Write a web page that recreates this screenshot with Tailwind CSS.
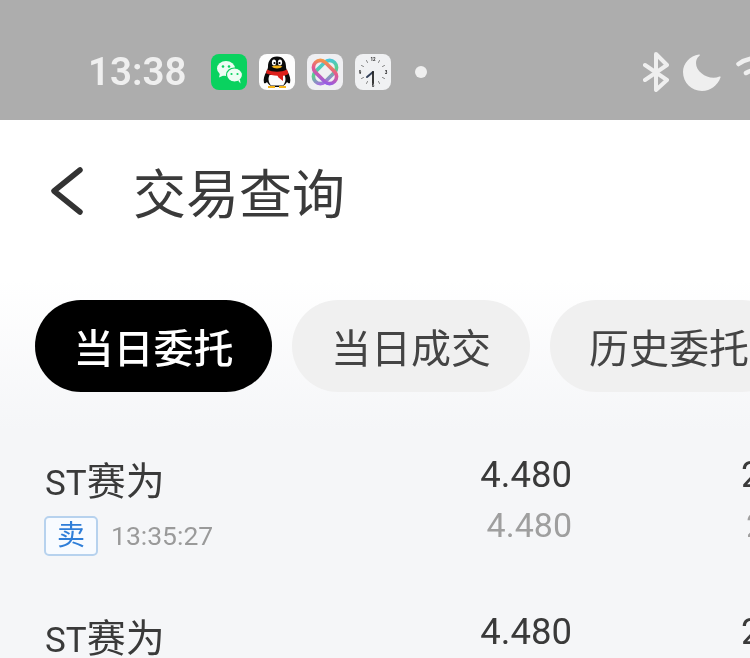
<!DOCTYPE html>
<html lang="zh">
<head>
<meta charset="utf-8">
<script src="https://cdn.jsdelivr.net/npm/@tailwindcss/browser@4"></script>
</head>
<body class="m-0">
<div class="w-[750px] h-[658px] overflow-hidden flex flex-col bg-[#f5f6f8] blur-[0.4px] font-['Roboto','Noto_Sans_CJK_SC',sans-serif]">
  <!-- status bar -->
  <div class="h-[120px] shrink-0 bg-[#adadad] flex items-center pl-[88px] pt-[24px] overflow-hidden">
    <span class="text-[38.500px] leading-none font-semibold text-[#efefef] w-[123px] shrink-0">13:38</span>
    <div class="flex items-center gap-[12px] shrink-0">
      <svg class="w-[36px] h-[36px] shrink-0" viewBox="0 0 36 36">
        <rect width="36" height="36" rx="8" fill="#0ad25f"/>
        <ellipse cx="15" cy="14.500" rx="9" ry="7.500" fill="#eefcf3"/>
        <path d="M9 19l-1 4.500 5.500-2.500z" fill="#eefcf3"/>
        <ellipse cx="23.500" cy="21" rx="8" ry="7" stroke="#0ad25f" stroke-width="1.200" fill="#eefcf3"/>
        <path d="M27 26.500l2.500 3-.5-4z" fill="#eefcf3"/>
        <circle cx="12" cy="12.500" r="1.300" fill="#0ad25f"/><circle cx="18" cy="12.500" r="1.300" fill="#0ad25f"/>
        <circle cx="20.500" cy="20" r="1.100" fill="#0ad25f"/><circle cx="26.500" cy="20" r="1.100" fill="#0ad25f"/>
      </svg>
      <svg class="w-[36px] h-[36px] shrink-0" viewBox="0 0 36 36">
        <rect width="36" height="36" rx="8" fill="#fdfdfd"/>
        <path d="M18 2.500c-6.500 0-9 5-9 10 0 2-.5 3-1.800 5.500C5.500 21 4 25 5 29c1 .8 2 0 3-1 1.500 3 5 5 10 5s8.500-2 10-5c1 1 2 1.800 3 1 1-4-.5-8-2.200-11-1.300-2.500-1.800-3.500-1.800-5.500 0-5-2.500-10-9-10z" fill="#0a0a0a"/>
        <path d="M10.500 21c-1.500 3-1.500 7 1.500 10.500h12c3-3.500 3-7.500 1.500-10.500z" fill="#fbfbfb"/>
        <path d="M8 15.500c6 3 14 3 20 0l1.500 4c-1 1.500-3 2-5.500 2.300v5.200l-4.500-3.500-1-1.700c-4 0-8-1-11.500-2.500z" fill="#dc1f1a"/>
        <ellipse cx="15" cy="8.500" rx="2.100" ry="3" fill="#fff"/><ellipse cx="21" cy="8.500" rx="2.100" ry="3" fill="#fff"/>
        <circle cx="15.500" cy="9" r="1.100" fill="#000"/><circle cx="20.500" cy="9" r="1.100" fill="#000"/>
        <path d="M12.500 12.500c2.500-1.500 8.500-1.500 11 0-2.500 2.500-8.500 2.500-11 0z" fill="#f5b417"/>
        <path d="M9 32h7v2H9zM20 32h7v2h-7z" fill="#f5b417"/>
      </svg>
      <svg class="w-[36px] h-[36px] shrink-0" viewBox="0 0 36 36" fill="none">
        <defs>
          <linearGradient id="g1" x1="0" y1="0" x2="1" y2="1"><stop offset="0" stop-color="#f6a03c"/><stop offset=".45" stop-color="#e55a8c"/><stop offset="1" stop-color="#8a5cf0"/></linearGradient>
          <linearGradient id="g2" x1="1" y1="0" x2="0" y2="1"><stop offset="0" stop-color="#45c5e8"/><stop offset=".5" stop-color="#5bd08c"/><stop offset="1" stop-color="#b45cf0"/></linearGradient>
        </defs>
        <rect width="36" height="36" rx="8" fill="#efeff2"/>
        <rect x="4.500" y="11" width="27" height="14" rx="7" transform="rotate(-45 18 18)" stroke="url(#g2)" stroke-width="3.600"/>
        <rect x="4.500" y="11" width="27" height="14" rx="7" transform="rotate(45 18 18)" stroke="url(#g1)" stroke-width="3.600"/>
      </svg>
      <svg class="w-[36px] h-[36px] shrink-0" viewBox="0 0 36 36">
        <rect width="36" height="36" rx="8" fill="#f0f1f3"/>
        <g stroke="#777" stroke-width=".9" stroke-linecap="round">
          <path d="M24.500 6.500l-1 2M29.500 11.500l-2 1M29.500 24.500l-2-1M24.500 29.500l-1-2M11.500 29.500l1-2M6.500 24.500l2-1M6.500 11.500l2 1M11.500 6.500l1 2"/>
        </g>
        <g font-family="Roboto" font-size="4.500" font-weight="700" fill="#222" text-anchor="middle">
          <text x="18" y="7">12</text><text x="31" y="19.500">3</text><text x="18" y="33">6</text><text x="5" y="19.500">9</text>
        </g>
        <path d="M18 18l-6 5" stroke="#33405a" stroke-width="2" stroke-linecap="round"/>
        <path d="M18 18v11" stroke="#222" stroke-width="1.800" stroke-linecap="round"/>
      </svg>
    </div>
    <span class="ml-[24px] w-[12px] h-[12px] rounded-full bg-[#efefef] shrink-0"></span>
    <div class="ml-[216px] flex items-center shrink-0">
      <svg class="w-[26px] h-[40px] shrink-0" viewBox="0 0 26 40" fill="none" stroke="#efefef" stroke-width="4" stroke-linecap="round" stroke-linejoin="round">
        <path d="M2 13l22 15-11 10V2l11 11L2 28"/>
      </svg>
      <svg class="ml-[14px] w-[38px] h-[38px] shrink-0" viewBox="0 0 38 38">
        <path d="M16 1.500C7 3 0 10 0 19c0 10.500 8.500 19 19 19 8.500 0 15.500-5.500 18.500-13.500.3-.8-.2-1.300-1-1-2 .8-4 1.200-6 1.200C22 24.700 13 18 13 10c0-3 1-5.500 3.500-7.300.7-.6.300-1.300-.5-1.200z" fill="#efefef"/>
      </svg>
      <svg class="ml-[15px] w-[40px] h-[40px] shrink-0" viewBox="0 0 40 40" fill="none" stroke="#efefef" stroke-width="4.500" stroke-linecap="round">
        <path d="M2.500 12c7-5 17-7 27-5M10 21c5-3 12-4 18-2"/>
      </svg>
    </div>
  </div>
  <!-- header -->
  <div class="bg-gradient-to-b from-white from-[160px] to-[#f5f6f8] to-[310px] shrink-0 h-[310px]">
    <div class="h-[142px] flex items-center pl-[50px]">
      <svg class="w-[34px] h-[50px] shrink-0" viewBox="0 0 34 50" fill="none" stroke="#333" stroke-width="5.500" stroke-linecap="round" stroke-linejoin="round">
        <path d="M30 4L4 25l26 21"/>
      </svg>
      <h1 class="ml-[50px] -translate-x-[1px] text-[53px] leading-none font-normal text-[#3a3a3a] font-['Noto_Sans_CJK_SC',sans-serif]">交易查询</h1>
    </div>
    <div class="mt-[38px] flex gap-[20px] pl-[35px] overflow-hidden font-['Noto_Sans_CJK_SC',sans-serif] text-[40px] leading-none">
      <div class="w-[237px] h-[92px] shrink-0 rounded-full bg-black text-white flex items-center justify-center font-medium">当日委托</div>
      <div class="w-[238px] h-[92px] shrink-0 rounded-full bg-[#f0f0f0] text-[#444] flex items-center justify-center">当日成交</div>
      <div class="w-[238px] h-[92px] shrink-0 rounded-full bg-[#f0f0f0] text-[#444] flex items-center justify-center">历史委托</div>
    </div>
  </div>
  <!-- list -->
  <div class="flex flex-col">
    <div class="h-[157px] shrink-0 grid grid-cols-[435px_92px_auto] pl-[45px] pt-[23px] text-[#3a3a3a]">
      <div class="flex flex-col">
        <span class="text-[39px] leading-[58px]"><span class="text-[35px]">ST</span>赛为</span>
        <div class="flex items-center mt-[3px] -ml-[1px]">
          <span class="w-[54px] h-[40px] border-2 border-[#b7d2ee] rounded-[5px] text-[#2f7ed8] text-[28px] leading-none flex items-center justify-center bg-[#f8fbff]">卖</span>
          <span class="ml-[13px] text-[26.500px] leading-none text-[#9a9a9a]">13:35:27</span>
        </div>
      </div>
      <div class="flex flex-col items-end">
        <span class="text-[36.500px] leading-[44px]">4.480</span>
        <span class="text-[34px] leading-[44px] mt-[6px] text-[#9f9f9f]">4.480</span>
      </div>
      <div class="flex flex-col pl-[169px]">
        <span class="text-[36.500px] leading-[44px]">2</span>
        <span class="text-[34px] leading-[44px] mt-[6px] pl-[5px] text-[#9f9f9f]">2</span>
      </div>
    </div>
    <div class="h-[157px] shrink-0 grid grid-cols-[435px_92px_auto] pl-[45px] pt-[23px] text-[#3a3a3a]">
      <div class="flex flex-col">
        <span class="text-[39px] leading-[58px]"><span class="text-[35px]">ST</span>赛为</span>
      </div>
      <div class="flex flex-col items-end">
        <span class="text-[36.500px] leading-[44px]">4.480</span>
      </div>
      <div class="flex flex-col pl-[169px]">
        <span class="text-[36.500px] leading-[44px]">2</span>
      </div>
    </div>
  </div>
</div>
</body>
</html>
